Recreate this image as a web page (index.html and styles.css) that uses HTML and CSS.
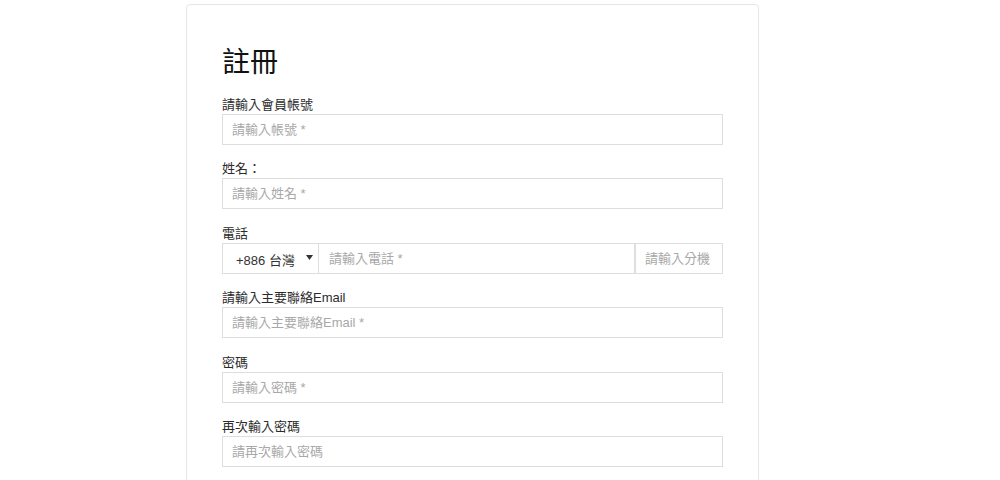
FILE: index.html
```html
<!DOCTYPE html>
<html lang="zh-Hant">
<head>
<meta charset="utf-8">
<title>註冊</title>
<link rel="stylesheet" href="styles.css">
</head>
<body>
<div class="card">
  <h1 class="title">註冊</h1>
  <div class="group">
    <label class="label">請輸入會員帳號</label>
    <input class="field" type="text" placeholder="請輸入帳號 *">
  </div>
  <div class="group">
    <label class="label">姓名：</label>
    <input class="field" type="text" placeholder="請輸入姓名 *">
  </div>
  <div class="group">
    <label class="label">電話</label>
    <div class="phone-row">
      <div class="country">
        <span class="country-text">+886 台灣</span>
        <svg class="caret" width="7" height="5" viewBox="0 0 7 5"><path d="M0 0H7L3.5 5Z" fill="#333"/></svg>
      </div>
      <input class="field phone" type="text" placeholder="請輸入電話 *">
      <input class="field ext" type="text" placeholder="請輸入分機">
    </div>
  </div>
  <div class="group">
    <label class="label">請輸入主要聯絡Email</label>
    <input class="field" type="text" placeholder="請輸入主要聯絡Email *">
  </div>
  <div class="group">
    <label class="label">密碼</label>
    <input class="field" type="password" placeholder="請輸入密碼 *">
  </div>
  <div class="group">
    <label class="label">再次輸入密碼</label>
    <input class="field" type="password" placeholder="請再次輸入密碼">
  </div>
</div>
</body>
</html>
```
FILE: styles.css
```css
html, body {
  margin: 0;
  padding: 0;
  background: #fff;
  font-family: "Liberation Sans", "Noto Sans CJK TC", sans-serif;
  color: #333;
}
body {
  padding-top: 4px;
  padding-left: 186px;
}
.card {
  width: 501px;
  border: 1px solid #e6e6e6;
  border-radius: 4px;
  padding: 38px 35px 40px 35px;
  box-sizing: content-box;
}
.title {
  margin: 0 0 10px 0;
  font-size: 28px;
  line-height: 40px;
  font-weight: normal;
  color: #111;
}
.group {
  display: flex;
  flex-direction: column;
  margin-bottom: 12.4px;
}
.label {
  display: block;
  font-size: 13px;
  line-height: 18px;
  padding-top: 3px;
  color: #2b2b2b;
}
.field {
  display: block;
  box-sizing: border-box;
  width: 100%;
  height: 31px;
  margin: 0;
  padding: 0 9px;
  border: 1px solid #dedede;
  border-radius: 0;
  font-family: inherit;
  font-size: 13px;
  color: #333;
  background: #fff;
  outline: none;
}
.field::placeholder {
  color: #a8a8a8;
}
.phone-row {
  display: flex;
  height: 31px;
}
.country {
  box-sizing: border-box;
  width: 97px;
  height: 31px;
  flex: none;
  display: flex;
  align-items: center;
  justify-content: space-between;
  padding: 2px 5px 0 13px;
  border: 1px solid #dedede;
  font-size: 13px;
  color: #333;
}
.caret {
  display: block;
  margin-top: -3px;
}
.phone {
  flex: 1;
  width: auto;
  border-left: none;
  padding-left: 10px;
}
.ext {
  flex: none;
  width: 88px;
  padding-left: 9px;
}
```
